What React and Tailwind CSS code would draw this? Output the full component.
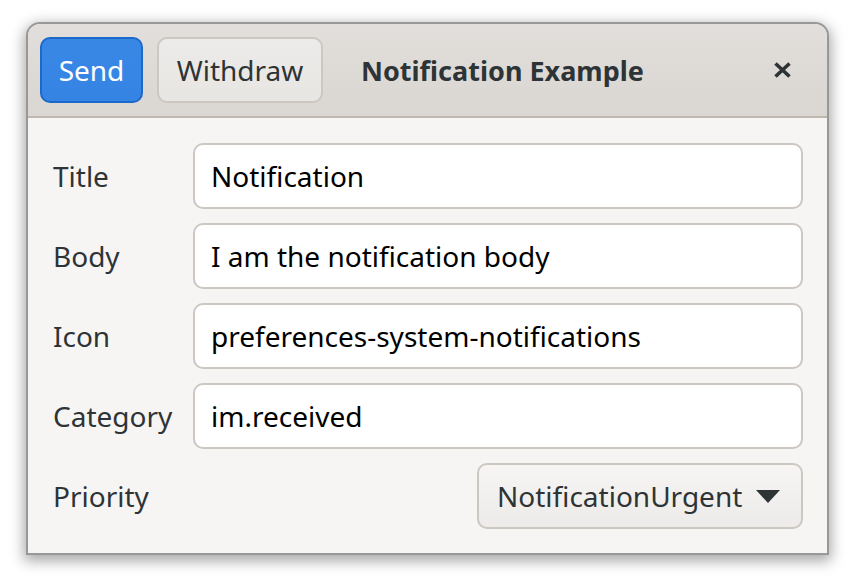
import React from "react";

const font = { fontFamily: '"Noto Sans", "Open Sans", sans-serif' };

function Entry({ value }) {
  return (
    <div className="h-[66px] flex items-center rounded-[10px] border-2 border-[#cdc7c2] bg-white px-[16px] text-[28px] text-black leading-none">
      {value}
    </div>
  );
}

function Label({ children }) {
  return <div className="flex items-center h-[66px] text-[28px] text-[#2e3436] leading-none">{children}</div>;
}

export default function App() {
  return (
    <div className="w-[856px] h-[588px] bg-white pl-[26px] pt-[22px]" style={font}>
      <div className="w-[803px] h-[533px] flex flex-col border-2 border-[#999897] rounded-t-[14px] bg-[#f6f5f4] shadow-[0_4px_14px_2px_rgba(0,0,0,0.35)] overflow-hidden">
        <div className="h-[94px] shrink-0 flex items-center px-[12px] border-b-2 border-[#bfb8b1] bg-gradient-to-t from-[#dad6d2] to-[#e1dedb]">
          <div className="w-[103px] h-[66px] flex items-center justify-center rounded-[10px] border-2 border-[#1b6acb] bg-gradient-to-t from-[#3584e4] to-[#3987e5] text-white text-[28px] leading-none">
            Send
          </div>
          <div className="ml-[14px] w-[166px] h-[66px] flex items-center justify-center rounded-[10px] border-2 border-[#cdc7c2] bg-gradient-to-t from-[#e8e6e3] to-[#edebe9] text-[#2e3436] text-[28px] leading-none">
            Withdraw
          </div>
          <div className="ml-[38px] text-[27px] font-bold text-[#2e3436] leading-none">Notification Example</div>
          <div className="ml-auto w-[66px] h-[66px] flex items-center justify-center">
            <svg width="17" height="16" viewBox="0 0 17 16">
              <path d="M1.5 1.5 L15.5 14.5 M15.5 1.5 L1.5 14.5" stroke="#2e3436" strokeWidth="3.6" strokeLinecap="butt" fill="none" />
            </svg>
          </div>
        </div>
        <div className="flex-1 pt-[25px] pl-[25px] pr-[24px] grid grid-cols-[140px_1fr] gap-y-[14px] content-start">
          <Label>Title</Label>
          <Entry value="Notification" />
          <Label>Body</Label>
          <Entry value="I am the notification body" />
          <Label>Icon</Label>
          <Entry value="preferences-system-notifications" />
          <Label>Category</Label>
          <Entry value="im.received" />
          <Label>Priority</Label>
          <div className="justify-self-end w-[326px] h-[66px] flex items-center rounded-[10px] border-2 border-[#cdc7c2] bg-gradient-to-t from-[#edebe9] to-[#f6f5f4] pl-[18px] pr-[21px] text-[28px] text-[#2e3436] leading-none">
            <span>NotificationUrgent</span>
            <svg className="ml-auto" width="24" height="13" viewBox="0 0 24 13">
              <path d="M0 0 H24 L12 13 Z" fill="#2e3436" />
            </svg>
          </div>
        </div>
      </div>
    </div>
  );
}
